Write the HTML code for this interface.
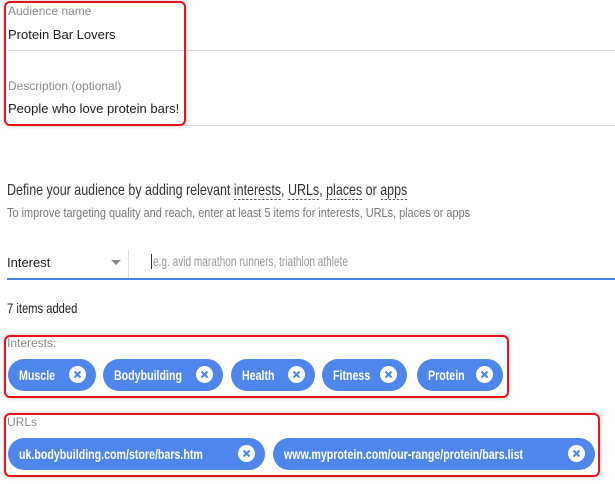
<!DOCTYPE html>
<html><head><style>
body{margin:0;width:615px;height:484px;background:#fff;font-family:"Liberation Sans",sans-serif;position:relative;overflow:hidden}
.a{position:absolute;white-space:nowrap;transform-origin:0 0}
.lbl{font-size:12px;color:#8a8a8a}
.val{font-size:13px;color:#212121}
.hr{position:absolute;height:1px;background:#ddd}
.rb{position:absolute;border:2px solid #e8141c;border-radius:6px;box-shadow:0 0 4px rgba(0,0,0,.25)}
.chip{position:absolute;height:32px;border-radius:16px;background:#4f86ec;color:#fff;font-size:14px;font-weight:bold;line-height:32px;box-sizing:border-box}
.chip .t{position:absolute;left:11px;top:0;white-space:nowrap;transform:scaleX(.76);transform-origin:0 0}
.x{position:absolute;right:10px;top:7px;width:17px;height:17px;border-radius:50%;background:#fff}
.x svg{position:absolute;left:0;top:0}
.u{border-bottom:1px dashed #555}
</style></head><body>
<div class="a lbl" style="left:8px;top:4px">Audience name</div>
<div class="a val" style="left:8px;top:27px">Protein Bar Lovers</div>
<div class="hr" style="left:8px;top:50px;width:607px"></div>
<div class="a lbl" style="left:8px;top:79px">Description (optional)</div>
<div class="a val" style="left:8px;top:101px">People who love protein bars!</div>
<div class="hr" style="left:8px;top:125px;width:607px"></div>
<div class="rb" style="left:4px;top:1px;width:178px;height:121px"></div>

<div class="a" style="left:7px;top:182px;font-size:16px;color:#333;transform:scaleX(.78)">Define your audience by adding relevant <span class="u">interests</span>, <span class="u">URLs</span>, <span class="u">places</span> or <span class="u">apps</span></div>
<div class="a" style="left:7px;top:205px;font-size:13px;color:#777;transform:scaleX(.84)">To improve targeting quality and reach, enter at least 5 items for interests, URLs, places or apps</div>

<div class="a val" style="left:7px;top:255px">Interest</div>
<div class="a" style="left:111px;top:260px;width:0;height:0;border-left:5px solid transparent;border-right:5px solid transparent;border-top:5px solid #888"></div>
<div class="a" style="left:128px;top:250px;width:1px;height:28px;background:#ddd"></div>
<div class="a" style="left:151px;top:254px;width:1px;height:15px;background:#333"></div>
<div class="a" style="left:153px;top:253px;font-size:14px;color:#999;transform:scaleX(.72)">e.g. avid marathon runners, triathlon athlete</div>
<div class="a" style="left:7px;top:278px;width:608px;height:2px;background:#4a80e6"></div>
<div class="a val" style="left:7px;top:300px;font-size:14px;transform:scaleX(.8)">7 items added</div>

<div class="a lbl" style="left:7px;top:336px">Interests:</div>
<div class="chip" style="left:8px;top:359px;width:88px"><span class="t">Muscle</span><span class="x"><svg width="17" height="17"><path d="M5.5 5.5L11.5 11.5M11.5 5.5L5.5 11.5" stroke="#4f86ec" stroke-width="2"/></svg></span></div>
<div class="chip" style="left:103px;top:359px;width:120px"><span class="t">Bodybuilding</span><span class="x"><svg width="17" height="17"><path d="M5.5 5.5L11.5 11.5M11.5 5.5L5.5 11.5" stroke="#4f86ec" stroke-width="2"/></svg></span></div>
<div class="chip" style="left:231px;top:359px;width:84px"><span class="t">Health</span><span class="x"><svg width="17" height="17"><path d="M5.5 5.5L11.5 11.5M11.5 5.5L5.5 11.5" stroke="#4f86ec" stroke-width="2"/></svg></span></div>
<div class="chip" style="left:322px;top:359px;width:85px"><span class="t">Fitness</span><span class="x"><svg width="17" height="17"><path d="M5.5 5.5L11.5 11.5M11.5 5.5L5.5 11.5" stroke="#4f86ec" stroke-width="2"/></svg></span></div>
<div class="chip" style="left:417px;top:359px;width:86px"><span class="t">Protein</span><span class="x"><svg width="17" height="17"><path d="M5.5 5.5L11.5 11.5M11.5 5.5L5.5 11.5" stroke="#4f86ec" stroke-width="2"/></svg></span></div>
<div class="rb" style="left:4px;top:335px;width:501px;height:59px"></div>

<div class="a lbl" style="left:7px;top:415px">URLs</div>
<div class="chip" style="left:8px;top:438px;width:257px"><span class="t">uk.bodybuilding.com/store/bars.htm</span><span class="x"><svg width="17" height="17"><path d="M5.5 5.5L11.5 11.5M11.5 5.5L5.5 11.5" stroke="#4f86ec" stroke-width="2"/></svg></span></div>
<div class="chip" style="left:273px;top:438px;width:322px"><span class="t">www.myprotein.com/our-range/protein/bars.list</span><span class="x"><svg width="17" height="17"><path d="M5.5 5.5L11.5 11.5M11.5 5.5L5.5 11.5" stroke="#4f86ec" stroke-width="2"/></svg></span></div>
<div class="rb" style="left:4px;top:413px;width:592px;height:60px"></div>
</body></html>
